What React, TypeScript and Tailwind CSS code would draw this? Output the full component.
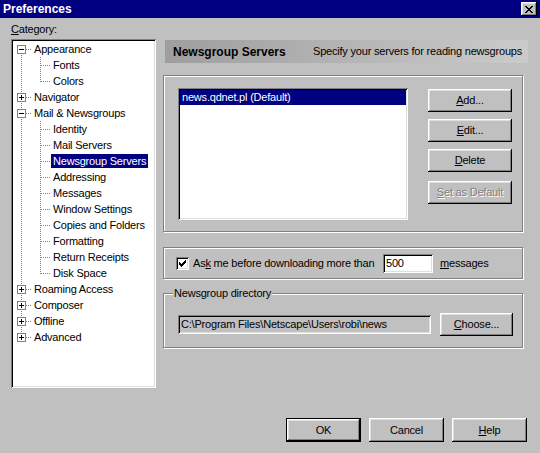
import React from 'react'

const raised =
  'shadow-[inset_-1px_-1px_0_#000,inset_1px_1px_0_#fff,inset_-2px_-2px_0_#808080,inset_2px_2px_0_#dfdfdf]'
const sunken =
  'shadow-[inset_1px_1px_0_#808080,inset_-1px_-1px_0_#fff,inset_2px_2px_0_#000,inset_-2px_-2px_0_#dfdfdf]'
const etched = 'border border-[#808080] shadow-[inset_1px_1px_0_#fff,1px_1px_0_#fff]'

// little pixel-art glyphs (close X, check mark)
function Pixels({ rows, color = '#000' }: { rows: string[]; color?: string }) {
  const w = rows[0].length
  return (
    <svg width={w} height={rows.length} shapeRendering="crispEdges">
      {rows.flatMap((r, y) =>
        r.split('').map((c, x) =>
          c === 'x' ? <rect key={`${x}-${y}`} x={x} y={y} width={1} height={1} fill={color} /> : null,
        ),
      )}
    </svg>
  )
}

const closeX = ['xx....xx', '.xx..xx.', '..xxxx..', '...xx...', '..xxxx..', '.xx..xx.', 'xx....xx']
const check = ['......x', '.....xx', 'x...xxx', 'xx.xxx.', 'xxxxx..', '.xxx...', '..x....']

interface TreeItem {
  label: string
  level: 0 | 1
  exp?: '+' | '-'
  last?: boolean
  selected?: boolean
}

const tree: TreeItem[] = [
  { label: 'Appearance', level: 0, exp: '-' },
  { label: 'Fonts', level: 1 },
  { label: 'Colors', level: 1, last: true },
  { label: 'Navigator', level: 0, exp: '+' },
  { label: 'Mail & Newsgroups', level: 0, exp: '-' },
  { label: 'Identity', level: 1 },
  { label: 'Mail Servers', level: 1 },
  { label: 'Newsgroup Servers', level: 1, selected: true },
  { label: 'Addressing', level: 1 },
  { label: 'Messages', level: 1 },
  { label: 'Window Settings', level: 1 },
  { label: 'Copies and Folders', level: 1 },
  { label: 'Formatting', level: 1 },
  { label: 'Return Receipts', level: 1 },
  { label: 'Disk Space', level: 1, last: true },
  { label: 'Roaming Access', level: 0, exp: '+' },
  { label: 'Composer', level: 0, exp: '+' },
  { label: 'Offline', level: 0, exp: '+' },
  { label: 'Advanced', level: 0, exp: '+', last: true },
]

function TreeRow({ item, first }: { item: TreeItem; first: boolean }) {
  const line = { stroke: '#808080', strokeWidth: 1, strokeDasharray: '1 1' }
  const w = item.level === 0 ? 19 : 38
  return (
    <div className="flex h-[16px] items-center">
      <svg width={w} height={16} shapeRendering="crispEdges" className="shrink-0">
        {item.level === 0 ? (
          <>
            <line x1={8.5} x2={8.5} y1={first ? 8 : 0} y2={item.last ? 8 : 16} {...line} />
            <line x1={9} x2={19} y1={8.5} y2={8.5} {...line} />
            {item.exp && (
              <>
                <rect x={4.5} y={4.5} width={8} height={8} fill="#fff" stroke="#808080" />
                <line x1={6} x2={11} y1={8.5} y2={8.5} stroke="#000" />
                {item.exp === '+' && <line x1={8.5} x2={8.5} y1={6} y2={11} stroke="#000" />}
              </>
            )}
          </>
        ) : (
          <>
            <line x1={8.5} x2={8.5} y1={0} y2={16} {...line} />
            <line x1={27.5} x2={27.5} y1={0} y2={item.last ? 9 : 16} {...line} />
            <line x1={28} x2={38} y1={8.5} y2={8.5} {...line} />
          </>
        )}
      </svg>
      <span
        className={`px-[2px] leading-[14px] whitespace-nowrap ${
          item.selected ? 'bg-[#000080] text-white' : ''
        }`}
      >
        {item.label}
      </span>
    </div>
  )
}

function Button({
  children,
  className = '',
  disabled,
  isDefault,
}: {
  children: React.ReactNode
  className?: string
  disabled?: boolean
  isDefault?: boolean
}) {
  const inner = (
    <div
      className={`flex h-full w-full items-center justify-center whitespace-nowrap ${raised} ${
        disabled ? 'text-[#808080] [text-shadow:1px_1px_0_#fff]' : ''
      }`}
    >
      {children}
    </div>
  )
  return (
    <div className={`shrink-0 ${isDefault ? 'border border-black' : ''} ${className}`}>{inner}</div>
  )
}

export default function App() {
  return (
    <div className="flex h-[453px] w-[540px] flex-col bg-[#c0c0c0] font-['Liberation_Sans',Arial,sans-serif] text-[11px] tracking-[-0.2px] text-black select-none">
      {/* Title bar */}
      <div className="flex h-[18px] shrink-0 items-center justify-between bg-[#000080] pl-[3px] pr-[3px]">
        <span className="text-[12px] font-bold tracking-normal text-white">Preferences</span>
        <div className={`flex h-[14px] w-[16px] items-center justify-center bg-[#c0c0c0] ${raised}`}>
          <Pixels rows={closeX} />
        </div>
      </div>

      <div className="flex">
        {/* Category tree */}
        <div className="ml-[11px] flex w-[145px] flex-col">
          <div className="mt-[4px] h-[14px] leading-[14px]">
            <u>C</u>ategory:
          </div>
          <div className={`mt-[3px] h-[349px] bg-white pl-[2px] pt-[2px] ${sunken}`}>
            {tree.map((item, i) => (
              <TreeRow key={item.label} item={item} first={i === 0} />
            ))}
          </div>
        </div>

        {/* Panel */}
        <div className="ml-[7px] flex w-[365px] flex-col">
          <div className="ml-[2px] mt-[22px] flex h-[23px] w-[363px] items-center whitespace-nowrap bg-linear-to-r from-[#9e9e9e] to-[#cbcbcb] pl-[8px]">
            <span className="w-[140px] text-[12px] font-bold tracking-normal">Newsgroup Servers</span>
            <span>Specify your servers for reading newsgroups</span>
          </div>

          <div className={`mt-[12px] flex h-[157px] w-[360px] pl-[14px] pt-[12px] ${etched}`}>
            <div className={`h-[132px] w-[230px] bg-white p-[2px] ${sunken}`}>
              <div className="h-[15px] bg-[#000080] pl-[2px] leading-[15px] text-white">
                news.qdnet.pl (Default)
              </div>
            </div>
            <div className="ml-[20px] mt-[1px] flex flex-col gap-[7px]">
              <Button className="h-[23px] w-[84px]">
                <span>
                  <u>A</u>dd...
                </span>
              </Button>
              <Button className="h-[23px] w-[84px]">
                <span>
                  <u>E</u>dit...
                </span>
              </Button>
              <Button className="h-[23px] w-[84px]">
                <span>
                  <u>D</u>elete
                </span>
              </Button>
              <Button className="mt-[2px] h-[23px] w-[84px]" disabled>
                <span>
                  <u>S</u>et as Default
                </span>
              </Button>
            </div>
          </div>

          <div className={`mt-[15px] flex h-[32px] w-[360px] items-center pl-[12px] ${etched}`}>
            <div className={`flex h-[13px] w-[13px] items-center justify-center bg-white ${sunken}`}>
              <Pixels rows={check} />
            </div>
            <span className="ml-[4px] w-[190px] whitespace-nowrap">
              As<u>k</u> me before downloading more than
            </span>
            <div className={`h-[19px] w-[50px] bg-white pl-[3px] leading-[19px] ${sunken}`}>500</div>
            <span className="ml-[7px]">
              <u>m</u>essages
            </span>
          </div>

          <div className={`relative mt-[14px] flex h-[55px] w-[360px] items-start pl-[14px] pt-[21px] ${etched}`}>
            <span className="absolute left-[9px] top-[-8px] bg-[#c0c0c0] px-[1px] leading-[14px]">
              Newsgroup directory
            </span>
            <div className={`h-[19px] w-[253px] bg-[#c0c0c0] pl-[3px] leading-[19px] whitespace-nowrap ${sunken}`}>
              C:\Program Files\Netscape\Users\robi\news
            </div>
            <Button className="-mt-[2px] ml-[9px] h-[23px] w-[73px]">
              <span>
                <u>C</u>hoose...
              </span>
            </Button>
          </div>
        </div>
      </div>

      {/* Dialog buttons */}
      <div className="mt-auto flex justify-end gap-[8px] pb-[11px] pr-[13px]">
        <Button className="h-[24px] w-[75px]" isDefault>
          OK
        </Button>
        <Button className="h-[24px] w-[75px]">Cancel</Button>
        <Button className="h-[24px] w-[75px]">
          <span>
            <u>H</u>elp
          </span>
        </Button>
      </div>
    </div>
  )
}
